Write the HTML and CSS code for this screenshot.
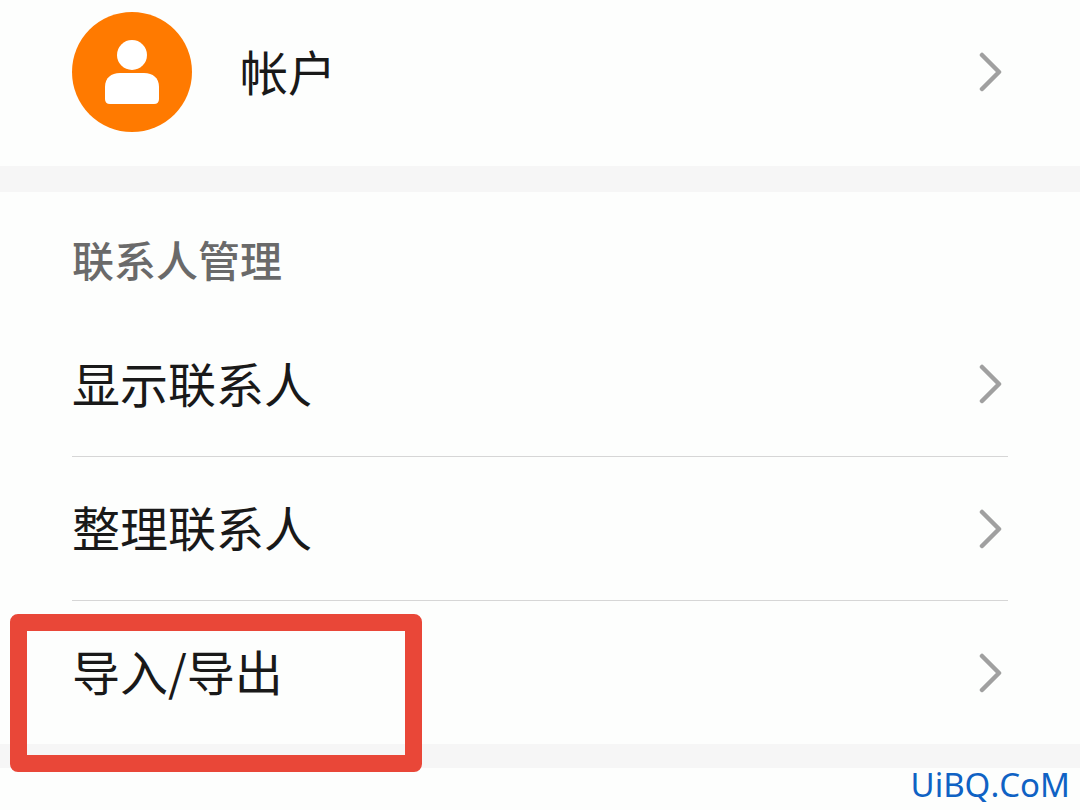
FILE: index.html
```html
<!DOCTYPE html>
<html lang="zh-CN">
<head>
   <meta charset="utf-8"/>
   <meta name="viewport" content="width=device-width, initial-scale=1" />
   <title>联系人管理</title>
   <link rel="stylesheet" href="styles.css">
</head>

<body>
<!-- account -->
<section class="account">
   <a class="row" href="#">
      <svg class="avatar" viewBox="0 0 120 120" aria-hidden="true">
         <circle cx="60" cy="60" r="60" fill="#ff7a00"/>
         <circle cx="60" cy="43" r="15" fill="#fff"/>
         <path d="M33 75c0-9 6-14 15-14h24c9 0 15 5 15 14v12q0 5-5 5H38q-5 0-5-5z" fill="#fff"/>
      </svg>
      <span class="label">帐户</span>
      <svg class="arrow" viewBox="0 0 24 40" aria-hidden="true"><path d="M4 3l17 17L4 37"/></svg>
   </a>
</section>

<!-- contacts -->
<section class="contacts">
   <h2>联系人管理</h2>
   <ul class="list">
      <li>
         <a class="row" href="#">
            <span class="label">显示联系人</span>
            <svg class="arrow" viewBox="0 0 24 40" aria-hidden="true"><path d="M4 3l17 17L4 37"/></svg>
         </a>
      </li>
      <li>
         <a class="row" href="#">
            <span class="label">整理联系人</span>
            <svg class="arrow" viewBox="0 0 24 40" aria-hidden="true"><path d="M4 3l17 17L4 37"/></svg>
         </a>
      </li>
      <li class="marked">
         <a class="row" href="#">
            <span class="label">导入/导出</span>
            <svg class="arrow" viewBox="0 0 24 40" aria-hidden="true"><path d="M4 3l17 17L4 37"/></svg>
         </a>
      </li>
   </ul>
</section>

<footer>UiBQ.CoM</footer>
</body>
</html>
```
FILE: styles.css
```css
*,
*::after {
   box-sizing: border-box;
}

body {
   margin: 0;
   background: #fdfefd;
   color: #191919;
   font-family: "Noto Sans CJK SC", sans-serif;
}

.account {
   padding: 0 72px 22px;
   border-bottom: 26px solid #f6f6f6;
}

.contacts {
   border-bottom: 24px solid #f6f6f6;
}

h2 {
   margin: 0;
   padding: 37px 72px 23px;
   font-size: 42px;
   line-height: 60px;
   font-weight: 500;
   color: #6a6a6a;
}

.row {
   display: flex;
   align-items: center;
   height: 144px;
   padding-right: 6px;
   color: inherit;
   text-decoration: none;
}

.label {
   flex: 1;
   padding-bottom: 5px;
   font-size: 48px;
   line-height: 72px;
}

.avatar {
   width: 120px;
   height: 120px;
   margin-right: 48px;
}

.arrow {
   width: 24px;
   height: 40px;
   fill: none;
   stroke: #a0a0a0;
   stroke-width: 4.5;
   stroke-linecap: round;
   stroke-linejoin: round;
}

.list {
   margin: 0;
   padding: 0 72px;
   list-style: none;
}

.list li + li {
   height: 144px;
   border-top: 1px solid #d6d6d6;
}

.list li + li .row {
   height: 143px;
}

/* red frame over the import/export row */
.marked {
   position: relative;
}

.marked::after {
   content: "";
   position: absolute;
   top: 13px;
   left: -62px;
   width: 412px;
   height: 158px;
   border: 17px solid #e94738;
   border-radius: 8px;
   pointer-events: none;
}

footer {
   padding: 0 10px;
   font-family: "Noto Sans", sans-serif;
   font-size: 33px;
   line-height: 34px;
   font-kerning: none;
   text-align: right;
   color: #0f62c4;
}
```
